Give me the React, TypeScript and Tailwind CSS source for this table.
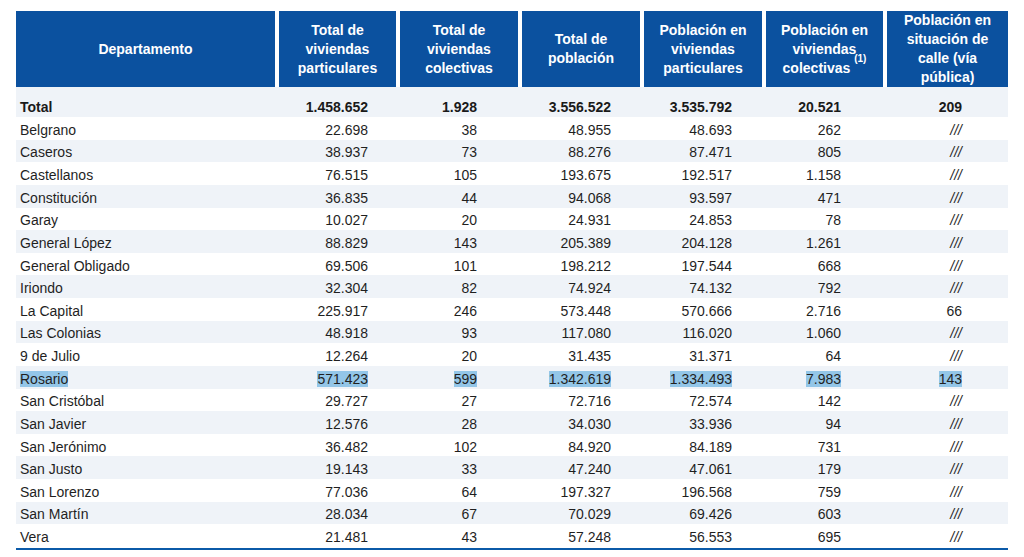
type Row = {
  name: string;
  vals: string[];
};

const rows: Row[] = [
  { name: "Belgrano", vals: ["22.698", "38", "48.955", "48.693", "262", "///"] },
  { name: "Caseros", vals: ["38.937", "73", "88.276", "87.471", "805", "///"] },
  { name: "Castellanos", vals: ["76.515", "105", "193.675", "192.517", "1.158", "///"] },
  { name: "Constitución", vals: ["36.835", "44", "94.068", "93.597", "471", "///"] },
  { name: "Garay", vals: ["10.027", "20", "24.931", "24.853", "78", "///"] },
  { name: "General López", vals: ["88.829", "143", "205.389", "204.128", "1.261", "///"] },
  { name: "General Obligado", vals: ["69.506", "101", "198.212", "197.544", "668", "///"] },
  { name: "Iriondo", vals: ["32.304", "82", "74.924", "74.132", "792", "///"] },
  { name: "La Capital", vals: ["225.917", "246", "573.448", "570.666", "2.716", "66"] },
  { name: "Las Colonias", vals: ["48.918", "93", "117.080", "116.020", "1.060", "///"] },
  { name: "9 de Julio", vals: ["12.264", "20", "31.435", "31.371", "64", "///"] },
  { name: "Rosario", vals: ["571.423", "599", "1.342.619", "1.334.493", "7.983", "143"] },
  { name: "San Cristóbal", vals: ["29.727", "27", "72.716", "72.574", "142", "///"] },
  { name: "San Javier", vals: ["12.576", "28", "34.030", "33.936", "94", "///"] },
  { name: "San Jerónimo", vals: ["36.482", "102", "84.920", "84.189", "731", "///"] },
  { name: "San Justo", vals: ["19.143", "33", "47.240", "47.061", "179", "///"] },
  { name: "San Lorenzo", vals: ["77.036", "64", "197.327", "196.568", "759", "///"] },
  { name: "San Martín", vals: ["28.034", "67", "70.029", "69.426", "603", "///"] },
  { name: "Vera", vals: ["21.481", "43", "57.248", "56.553", "695", "///"] },
];

const grid = "grid grid-cols-[259px_117px_118px_118px_118px_117px_121px] gap-x-[4px]";
// right padding per numeric column so the figures line up like the source
const pads = ["pr-[28px]", "pr-[41px]", "pr-[29px]", "pr-[30px]", "pr-[42px]", "pr-[46px]"];

const Hl = ({ on, children }: { on: boolean; children: React.ReactNode }) =>
  on ? <span className="bg-[#93c6e8]">{children}</span> : <>{children}</>;

export default function App() {
  return (
    <div
      className="w-[1024px] h-[557px] bg-white overflow-hidden pt-[11px] pl-[16px]"
      style={{ fontFamily: '"Liberation Sans", Arial, sans-serif' }}
    >
      <div className="w-[992px]">
        {/* header */}
        <div className={`${grid} h-[76px] text-white font-bold text-[14px] leading-[19px] text-center`}>
          <div className="bg-[#0b519f] flex items-center justify-center">Departamento</div>
          <div className="bg-[#0b519f] flex items-center justify-center">
            Total de<br />viviendas<br />particulares
          </div>
          <div className="bg-[#0b519f] flex items-center justify-center">
            Total de<br />viviendas<br />colectivas
          </div>
          <div className="bg-[#0b519f] flex items-center justify-center">
            Total de<br />población
          </div>
          <div className="bg-[#0b519f] flex items-center justify-center">
            Población en<br />viviendas<br />particulares
          </div>
          <div className="bg-[#0b519f] flex items-center justify-center">
            <span>
              Población en<br />viviendas<br />colectivas{" "}
              <sup className="text-[10px] align-[6px]">(1)</sup>
            </span>
          </div>
          <div className="bg-[#0b519f] flex items-center justify-center">
            Población en<br />situación de<br />calle (vía<br />pública)
          </div>
        </div>

        {/* total */}
        <div className={`${grid} h-[30px] bg-[#eff3f8] text-[14px] leading-[16px] font-bold text-[#1a1a1a] items-center pt-[10px]`}>
          <div className="pl-[4px]">Total</div>
          {["1.458.652", "1.928", "3.556.522", "3.535.792", "20.521", "209"].map((v, i) => (
            <div key={i} className={`text-right ${pads[i]}`}>{v}</div>
          ))}
        </div>

        {/* departamentos */}
        {rows.map((r, idx) => {
          const hl = r.name === "Rosario";
          return (
            <div
              key={r.name}
              className={`${grid} h-[22.63px] items-center pt-[3px] text-[14px] leading-[16px] text-[#1f1f1f] ${
                idx % 2 === 1 ? "bg-[#eff3f8]" : ""
              }`}
            >
              <div className="pl-[4px]">
                <Hl on={hl}>{r.name}</Hl>
              </div>
              {r.vals.map((v, i) => (
                <div key={i} className={`text-right ${pads[i]} ${v === "///" ? "italic" : ""}`}>
                  <Hl on={hl}>{v}</Hl>
                </div>
              ))}
            </div>
          );
        })}
        <div className="h-[2px] bg-[#0b5aa8] mt-[1px]" />
      </div>
    </div>
  );
}
